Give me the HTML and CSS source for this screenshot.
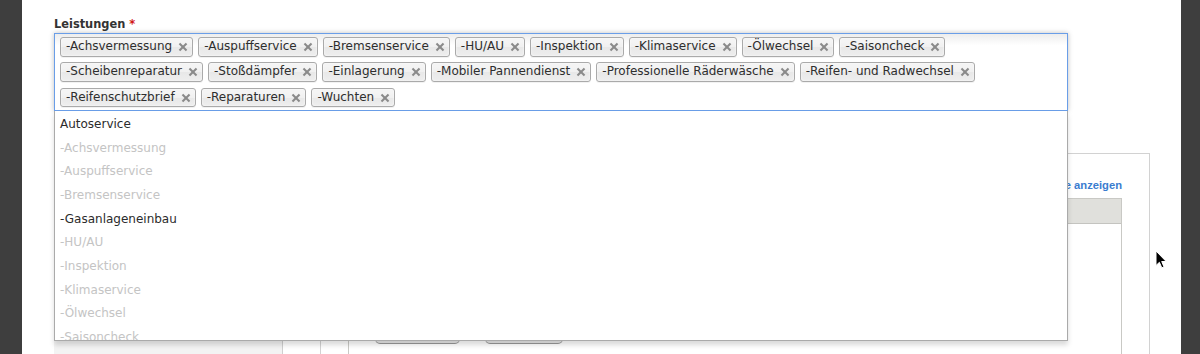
FILE: index.html
```html
<!DOCTYPE html>
<html lang="de">
<head>
    <meta charset="UTF-8">
    <meta name="viewport" content="width=device-width, initial-scale=1.0">
    <title>Leistungen</title>
    <link rel="stylesheet" href="styles.css">
</head>
<body>
    <div class="page">
        <div class="field">
            <label class="field-label">Leistungen <span class="req">*</span></label>
            <div class="chosen">
                <ul class="choices">
                    <li class="tag">-Achsvermessung<span class="tag-close"></span></li>
                    <li class="tag">-Auspuffservice<span class="tag-close"></span></li>
                    <li class="tag">-Bremsenservice<span class="tag-close"></span></li>
                    <li class="tag">-HU/AU<span class="tag-close"></span></li>
                    <li class="tag">-Inspektion<span class="tag-close"></span></li>
                    <li class="tag">-Klimaservice<span class="tag-close"></span></li>
                    <li class="tag">-Ölwechsel<span class="tag-close"></span></li>
                    <li class="tag">-Saisoncheck<span class="tag-close"></span></li>
                    <li class="tag">-Scheibenreparatur<span class="tag-close"></span></li>
                    <li class="tag">-Stoßdämpfer<span class="tag-close"></span></li>
                    <li class="tag">-Einlagerung<span class="tag-close"></span></li>
                    <li class="tag">-Mobiler Pannendienst<span class="tag-close"></span></li>
                    <li class="tag">-Professionelle Räderwäsche<span class="tag-close"></span></li>
                    <li class="tag">-Reifen- und Radwechsel<span class="tag-close"></span></li>
                    <li class="tag">-Reifenschutzbrief<span class="tag-close"></span></li>
                    <li class="tag">-Reparaturen<span class="tag-close"></span></li>
                    <li class="tag">-Wuchten<span class="tag-close"></span></li>
                </ul>
                <div class="drop">
                    <ul class="results">
                        <li class="group">Autoservice</li>
                        <li class="picked">-Achsvermessung</li>
                        <li class="picked">-Auspuffservice</li>
                        <li class="picked">-Bremsenservice</li>
                        <li>-Gasanlageneinbau</li>
                        <li class="picked">-HU/AU</li>
                        <li class="picked">-Inspektion</li>
                        <li class="picked">-Klimaservice</li>
                        <li class="picked">-Ölwechsel</li>
                        <li class="picked">-Saisoncheck</li>
                        <li class="picked">-Scheibenreparatur</li>
                        <li class="picked">-Stoßdämpfer</li>
                    </ul>
                </div>
            </div>
        </div>

        <div class="section">
            <div class="side"></div>
            <div class="panel">
                <div class="panel-links">
                    <a href="#">Alle Einträge anzeigen</a>
                </div>
                <div class="table">
                    <div class="thead"></div>
                    <div class="tbody">
                        <button class="btn btn-wide" aria-label="Bearbeiten"></button>
                        <button class="btn" aria-label="Löschen"></button>
                    </div>
                </div>
            </div>
        </div>
    </div>

    <svg class="cursor" width="13" height="19" viewBox="0 0 13 19">
        <path d="M1 1 L1 15.5 L4.4 12.3 L6.8 17.8 L9 16.9 L6.7 11.5 L11.2 11.5 Z" fill="#000" stroke="#fff" stroke-width="1"/>
    </svg>
</body>
</html>
```

FILE: styles.css
```css
html, body {
    margin: 0;
    padding: 0;
    height: 354px;
    overflow: hidden;
}

body {
    background-color: #3e3e3e;
    font-family: "DejaVu Sans", Verdana, sans-serif;
    font-size: 12px;
    color: #333;
}

.page {
    margin: 0 19px 0 22px;
    height: 354px;
    overflow: hidden;
    background-color: #fff;
    padding: 18px 31px 0 32px;
    box-sizing: border-box;
}

.field-label {
    display: block;
    font-weight: bold;
    font-size: 11.4px;
    line-height: 13px;
    margin-bottom: 2px;
    color: #333;
}

.req {
    color: #d01616;
}

.chosen {
    position: relative;
    width: 1014px;
}

.choices {
    list-style: none;
    margin: 0;
    padding: 0 5px;
    border: 1px solid #6a9ee8;
    background-color: #fff;
    background-image: linear-gradient(#eee 1%, #fff 15%);
    box-shadow: 0 0 5px rgba(0, 0, 0, 0.25);
    display: flex;
    flex-wrap: wrap;
    min-height: 76px;
}

.tag {
    display: flex;
    align-items: center;
    margin: 3px 5px 2.5px 0;
    padding: 3px 5px 3px 5px;
    line-height: 11.5px;
    border: 1px solid #aaa;
    border-radius: 3px;
    background-image: linear-gradient(#f4f4f4 20%, #f0f0f0 50%, #e8e8e8 52%, #eee 100%);
    box-shadow: 0 0 2px #fff inset, 0 1px 0 rgba(0, 0, 0, 0.05);
    color: #2e2e2e;
    white-space: nowrap;
}

.tag-close {
    width: 8px;
    height: 8px;
    margin-left: 7px;
    position: relative;
}

.tag-close::before,
.tag-close::after {
    content: "";
    position: absolute;
    left: -1px;
    top: 3px;
    width: 10px;
    height: 2px;
    background-color: #8a8a8a;
    transform: rotate(45deg);
}

.tag-close::after {
    transform: rotate(-45deg);
}

.drop {
    position: absolute;
    top: 100%;
    left: 0;
    width: 100%;
    box-sizing: border-box;
    background-color: #fff;
    border: 1px solid #aaa;
    border-top: 0;
    box-shadow: 0 4px 5px rgba(0, 0, 0, 0.15);
    z-index: 10;
}

.results {
    list-style: none;
    margin: 0;
    padding: 2px 0 0 0;
    max-height: 227px;
    overflow: hidden;
}

.results li {
    padding: 5px 5px;
    line-height: 13.67px;
    color: #2b2b2b;
}

.results li.picked {
    color: #c4c4c4;
}

.section {
    display: flex;
    gap: 37px;
    margin-top: 42px;
    height: 220px;
}

.side {
    width: 228px;
    background-color: #f3f3f3;
    border-right: 1px solid #cfcfcf;
}

.panel {
    flex: 1;
    border: 1px solid #d2d2d2;
    padding: 24px 27px 0 27px;
}

.panel-links {
    text-align: right;
    line-height: 15px;
    margin-bottom: 5px;
}

.panel-links a {
    font-family: "Liberation Sans", Arial, sans-serif;
    font-size: 11.2px;
    color: #3a7ccf;
    text-decoration: none;
    font-weight: bold;
}

.table {
    border: 1px solid #c9c9c5;
    height: 180px;
}

.thead {
    height: 24px;
    background-color: #e0e0dc;
    border-bottom: 1px solid #c4c4c0;
}

.tbody {
    display: flex;
    gap: 25px;
    padding: 98px 0 0 26px;
}

.btn {
    height: 22px;
    border: 1px solid #a9a9a9;
    border-bottom-color: #999;
    border-radius: 5px;
    background-image: linear-gradient(#fafafa, #e6e6e6);
    width: 78px;
}

.btn-wide {
    width: 85px;
}

.cursor {
    position: absolute;
    left: 1155px;
    top: 250px;
}
```
